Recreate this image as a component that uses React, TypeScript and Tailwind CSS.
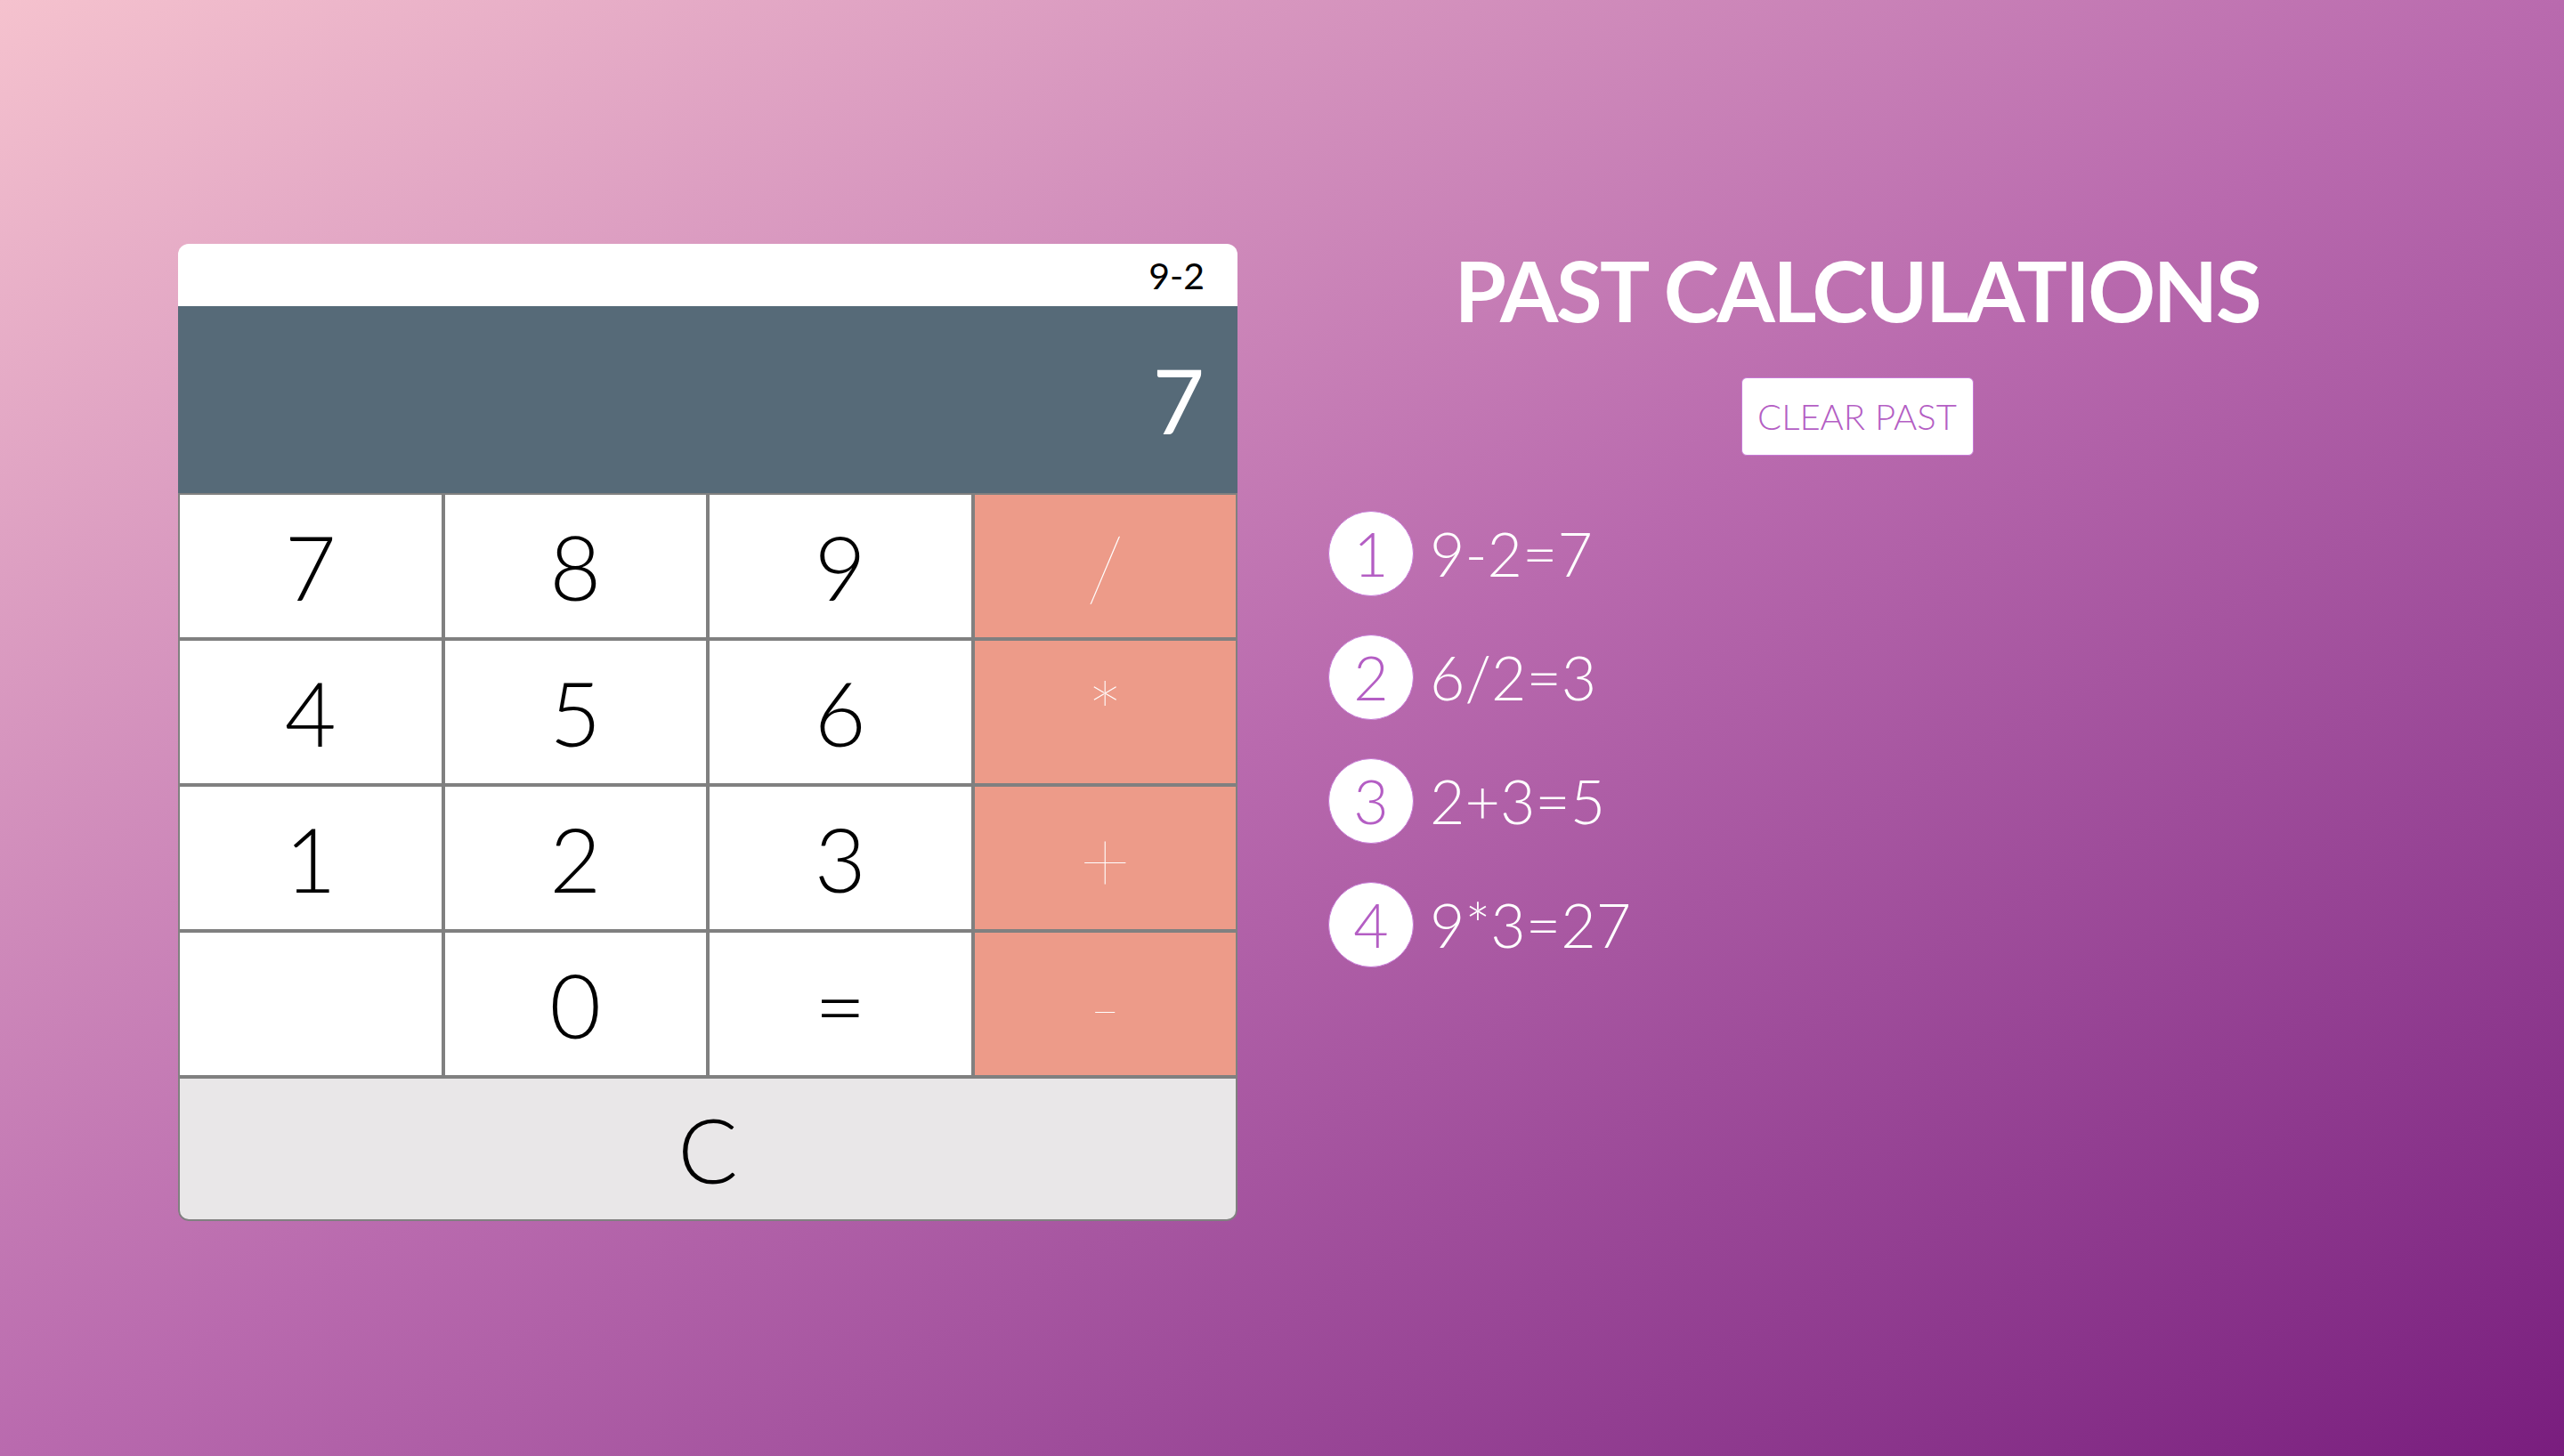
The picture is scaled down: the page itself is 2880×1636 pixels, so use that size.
import React, { useState } from "react";

const keys = [
  { label: "7", op: false },
  { label: "8", op: false },
  { label: "9", op: false },
  { label: "/", op: true },
  { label: "4", op: false },
  { label: "5", op: false },
  { label: "6", op: false },
  { label: "*", op: true },
  { label: "1", op: false },
  { label: "2", op: false },
  { label: "3", op: false },
  { label: "+", op: true },
  { label: "", op: false },
  { label: "0", op: false },
  { label: "=", op: false },
  { label: "-", op: true },
];

const pastCalcs = ["9-2=7", "6/2=3", "2+3=5", "9*3=27"];

function Calculator() {
  const [expression] = useState("9-2");
  const [result] = useState("7");

  return (
    <div className="w-[1190px] shrink-0 flex flex-col rounded-[12px] overflow-hidden">
      <div className="h-[70px] bg-white flex items-center justify-end pr-[37px]">
        <span className="text-[41px] leading-none text-black">{expression}</span>
      </div>
      <div className="h-[210px] bg-[#566a78] flex items-center justify-end pr-[37px]">
        <span className="text-[101px] leading-none text-white">{result}</span>
      </div>
      <div className="grid grid-cols-4">
        {keys.map((key, i) => (
          <button
            key={i}
            type="button"
            className={`h-[164px] border-2 border-[#808080] flex items-center justify-center text-[100px] leading-none ${
              key.op
                ? "bg-[#ed9b89] text-white font-thin"
                : "bg-white text-black font-light"
            }`}
          >
            {key.label}
          </button>
        ))}
      </div>
      <button
        type="button"
        className="h-[162px] border-2 border-[#808080] bg-[#e9e7e8] rounded-b-[12px] flex items-center justify-center text-[100px] leading-none font-light text-black"
      >
        C
      </button>
    </div>
  );
}

function PastCalculations() {
  return (
    <div className="w-[1188px] shrink-0 flex flex-col pt-[5px]">
      <h1 className="text-center text-[94px] leading-none font-bold tracking-[-0.025em] text-white">
        PAST CALCULATIONS
      </h1>
      <div className="flex justify-center mt-[51px]">
        <button
          type="button"
          className="w-[261px] h-[88px] bg-white rounded-[6px] border border-[#c77ad6] text-[40px] leading-none font-light text-[#b45ec4]"
        >
          CLEAR PAST
        </button>
      </div>
      <ul className="mt-[62px] flex flex-col gap-[43px]">
        {pastCalcs.map((calc, i) => (
          <li key={calc} className="flex items-center gap-[18px]">
            <span className="w-[96px] h-[96px] rounded-full bg-white border border-[#c77ad6] flex items-center justify-center text-[68px] leading-none font-light text-[#b45ec4]">
              {i + 1}
            </span>
            <span className="text-[68px] leading-none font-light text-white">
              {calc}
            </span>
          </li>
        ))}
      </ul>
    </div>
  );
}

function App() {
  return (
    <div className="min-h-screen w-full bg-linear-to-br from-[#f5c2ce] via-[#b96aae] to-[#791d7e] font-[Lato,sans-serif]">
      <div className="flex items-start gap-[102px] pl-[200px] pt-[274px]">
        <Calculator />
        <PastCalculations />
      </div>
    </div>
  );
}

export default App;
